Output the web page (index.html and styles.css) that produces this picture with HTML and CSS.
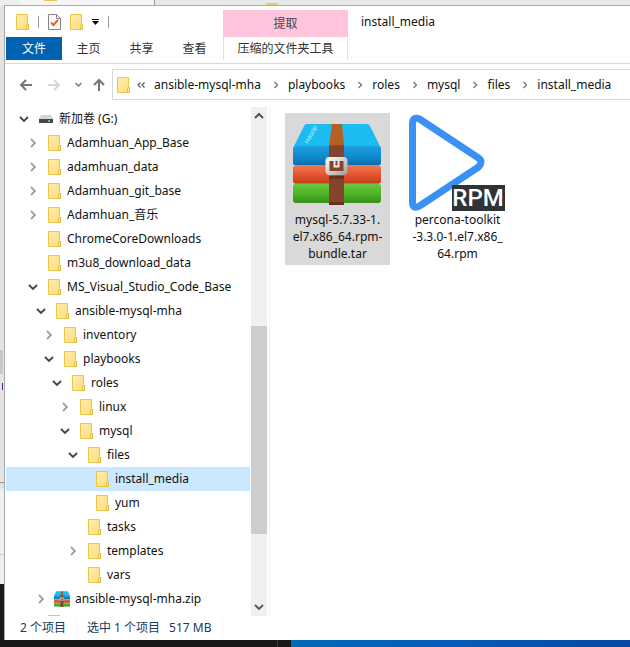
FILE: index.html
```html
<!DOCTYPE html>
<html lang="zh-CN">
<head>
<meta charset="utf-8">
<meta name="viewport" content="width=device-width, initial-scale=1">
<title>install_media</title>
<link rel="stylesheet" href="styles.css">
</head>
<body>
<svg class="defs" width="0" height="0" aria-hidden="true">
  <defs>
    <linearGradient id="fold" x1="0" y1="0" x2="1" y2="1"><stop offset="0" stop-color="#ffeeb0"/><stop offset="1" stop-color="#ffdc74"/></linearGradient>
    <linearGradient id="blue" x1="0" y1="0" x2="0" y2="1"><stop offset="0" stop-color="#1f9ade"/><stop offset=".5" stop-color="#108ed0"/><stop offset="1" stop-color="#0b6cae"/></linearGradient>
    <linearGradient id="red" x1="0" y1="0" x2="0" y2="1"><stop offset="0" stop-color="#f07850"/><stop offset=".5" stop-color="#e4552f"/><stop offset="1" stop-color="#c23c1c"/></linearGradient>
    <linearGradient id="green" x1="0" y1="0" x2="0" y2="1"><stop offset="0" stop-color="#6cc840"/><stop offset=".5" stop-color="#4fb428"/><stop offset="1" stop-color="#359017"/></linearGradient>
    <linearGradient id="metal" x1="0" y1="0" x2="1" y2="1"><stop offset="0" stop-color="#fafafa"/><stop offset="1" stop-color="#aaa6a2"/></linearGradient>
    <symbol id="folder" viewBox="0 0 13 16"><path d="M.5.5h11v10h1v5H.5z" fill="url(#fold)" stroke="#ecc64c"/><path d="M10.5 15.5v-4l1-1h1v5z" fill="#ffe89a" stroke="#e5bd42"/></symbol>
    <symbol id="right" viewBox="0 0 8 10"><path d="M2 1l4 4-4 4" fill="none" stroke="currentColor" stroke-width="1.8"/></symbol>
    <symbol id="down" viewBox="0 0 10 8"><path d="M1 2l4 4 4-4" fill="none" stroke="currentColor" stroke-width="1.8"/></symbol>
    <symbol id="archive" viewBox="0 0 88 82" preserveAspectRatio="none">
      <path d="M14 1h60q2 0 3 2l11 22H0L11 3q1-2 3-2z" fill="#1bbcf2"/>
      <rect y="23" width="88" height="19" rx="3" fill="url(#blue)"/>
      <rect y="42" width="88" height="18" rx="3" fill="url(#red)"/>
      <rect y="60" width="88" height="19" rx="3" fill="url(#green)"/>
      <path d="M39 1h10l2 22H36z" fill="#b46022"/>
      <path d="M36 22h15v59H36z" fill="#86432c"/>
      <path d="M36 52h15v3H36zM36 78h15v3H36z" fill="#683020"/>
      <rect x="34.500" y="35.500" width="18" height="14" rx="2" fill="#86432c" stroke="url(#metal)" stroke-width="4"/>
      <path d="M41.500 37v6h4v-6" fill="none" stroke="#eee" stroke-width="2"/>
    </symbol>
  </defs>
</svg>
<div class="desktop">
  <div class="behind-top" aria-hidden="true"></div>
  <div class="behind-left" aria-hidden="true"></div>
  <main class="window">
    <header class="head">
      <div class="quick">
        <svg class="folder"><use href="#folder"/></svg>
        <span class="bar"></span>
        <button class="plain" aria-label="属性"><svg class="check" viewBox="0 0 13 16"><path d="M.5.5h8l4 4v11H.5z" fill="#fafafa" stroke="#858585"/><path d="M8.500.5v4h4" fill="none" stroke="#858585"/><path d="M3 8.500L5.500 11l4.500-5" fill="none" stroke="#e8602c" stroke-width="2"/></svg></button>
        <button class="plain" aria-label="新建文件夹"><svg class="folder"><use href="#folder"/></svg></button>
        <button class="plain" aria-label="自定义"><svg class="more" viewBox="0 0 7 6"><path d="M0 0h7v1H0zM0 2h7L3.500 6z"/></svg></button>
        <span class="bar"></span>
      </div>
      <nav class="tabs">
        <button class="tab file">文件</button>
        <button class="tab">主页</button>
        <button class="tab">共享</button>
        <button class="tab">查看</button>
      </nav>
      <div class="context">
        <div class="extract">提取</div>
        <button class="tools">压缩的文件夹工具</button>
      </div>
      <h1 class="title">install_media</h1>
    </header>
    <div class="address">
      <div class="moves">
        <button class="plain" aria-label="后退"><svg class="arrow" viewBox="0 0 14 14"><path d="M13 7H2M7 2L2 7l5 5" fill="none" stroke="#757575" stroke-width="2"/></svg></button>
        <button class="plain" aria-label="前进"><svg class="arrow" viewBox="0 0 14 14"><path d="M1 7h11M7 2l5 5-5 5" fill="none" stroke="#d8d8d8" stroke-width="2"/></svg></button>
        <button class="plain" aria-label="最近"><svg class="tiny" viewBox="0 0 7 5"><path d="M.5 1l3 3 3-3" fill="none" stroke="#777" stroke-width="1.500"/></svg></button>
        <button class="plain" aria-label="向上"><svg class="arrow" viewBox="0 0 14 14"><path d="M7 13V2M2 7l5-5 5 5" fill="none" stroke="#757575" stroke-width="2"/></svg></button>
      </div>
      <nav class="crumbs" aria-label="地址">
        <svg class="folder"><use href="#folder"/></svg>
        <svg class="double" viewBox="0 0 8 6"><path d="M3.500.5L1 3l2.500 2.500M7.500.5L5 3l2.500 2.500" fill="none" stroke="#555" stroke-width="1.200"/></svg>
        <a href="#">ansible-mysql-mha</a><svg class="sep"><use href="#right"/></svg>
        <a href="#">playbooks</a><svg class="sep"><use href="#right"/></svg>
        <a href="#">roles</a><svg class="sep"><use href="#right"/></svg>
        <a href="#">mysql</a><svg class="sep"><use href="#right"/></svg>
        <a href="#">files</a><svg class="sep"><use href="#right"/></svg>
        <a href="#">install_media</a>
      </nav>
    </div>
    <div class="content">
      <div class="side">
        <ul class="tree">
          <li class="d0"><svg class="open"><use href="#down"/></svg><svg class="drive" viewBox="0 0 14 8"><path d="M2 0h10l2 4H0z" fill="#d3d6d9"/><path d="M0 4h14v4H0z" fill="#43474b"/><path d="M9 5h2v2H9z" fill="#35e04c"/></svg><span>新加卷 (G:)</span></li>
          <li class="d1"><svg class="shut"><use href="#right"/></svg><svg class="folder"><use href="#folder"/></svg><span>Adamhuan_App_Base</span></li>
          <li class="d1"><svg class="shut"><use href="#right"/></svg><svg class="folder"><use href="#folder"/></svg><span>adamhuan_data</span></li>
          <li class="d1"><svg class="shut"><use href="#right"/></svg><svg class="folder"><use href="#folder"/></svg><span>Adamhuan_git_base</span></li>
          <li class="d1"><svg class="shut"><use href="#right"/></svg><svg class="folder"><use href="#folder"/></svg><span>Adamhuan_音乐</span></li>
          <li class="d1"><i class="none"></i><svg class="folder"><use href="#folder"/></svg><span>ChromeCoreDownloads</span></li>
          <li class="d1"><i class="none"></i><svg class="folder"><use href="#folder"/></svg><span>m3u8_download_data</span></li>
          <li class="d1"><svg class="open"><use href="#down"/></svg><svg class="folder"><use href="#folder"/></svg><span>MS_Visual_Studio_Code_Base</span></li>
          <li class="d2"><svg class="open"><use href="#down"/></svg><svg class="folder"><use href="#folder"/></svg><span>ansible-mysql-mha</span></li>
          <li class="d3"><svg class="shut"><use href="#right"/></svg><svg class="folder"><use href="#folder"/></svg><span>inventory</span></li>
          <li class="d3"><svg class="open"><use href="#down"/></svg><svg class="folder"><use href="#folder"/></svg><span>playbooks</span></li>
          <li class="d4"><svg class="open"><use href="#down"/></svg><svg class="folder"><use href="#folder"/></svg><span>roles</span></li>
          <li class="d5"><svg class="shut"><use href="#right"/></svg><svg class="folder"><use href="#folder"/></svg><span>linux</span></li>
          <li class="d5"><svg class="open"><use href="#down"/></svg><svg class="folder"><use href="#folder"/></svg><span>mysql</span></li>
          <li class="d6"><svg class="open"><use href="#down"/></svg><svg class="folder"><use href="#folder"/></svg><span>files</span></li>
          <li class="d7 current"><i class="none"></i><svg class="folder"><use href="#folder"/></svg><span>install_media</span></li>
          <li class="d7"><i class="none"></i><svg class="folder"><use href="#folder"/></svg><span>yum</span></li>
          <li class="d6"><i class="none"></i><svg class="folder"><use href="#folder"/></svg><span>tasks</span></li>
          <li class="d6"><svg class="shut"><use href="#right"/></svg><svg class="folder"><use href="#folder"/></svg><span>templates</span></li>
          <li class="d6"><i class="none"></i><svg class="folder"><use href="#folder"/></svg><span>vars</span></li>
          <li class="d2"><svg class="shut"><use href="#right"/></svg><svg class="zip"><use href="#archive"/></svg><span>ansible-mysql-mha.zip</span></li>
          <li class="next" aria-hidden="true"></li>
        </ul>
        <div class="scroll" aria-hidden="true">
          <svg class="scroll-arrow" viewBox="0 0 10 8"><path d="M1 6l4-4 4 4" fill="none" stroke="currentColor" stroke-width="2"/></svg>
          <div class="track"><div class="thumb"></div></div>
          <svg class="scroll-arrow"><use href="#down"/></svg>
        </div>
      </div>
      <section class="files" aria-label="文件">
        <figure class="item selected">
          <svg class="big" viewBox="0 0 92 96"><use href="#archive" x="1" y="8" width="88" height="83"/><text class="brand" transform="translate(16 29) rotate(-62)">Haozip</text></svg>
          <figcaption>mysql-5.7.33-1.<br>el7.x86_64.rpm-<br>bundle.tar</figcaption>
        </figure>
        <figure class="item">
          <svg class="big" viewBox="0 0 92 96"><path d="M.5 9v78q0 8 7 4l59-39q5-5 0-9L7.500 4q-7-3-7 5z" fill="none" stroke="#3991f5" stroke-width="7" stroke-linejoin="round"/><path d="M40 70h53v26H40z" fill="#2e3439"/><text class="rpm" x="66" y="91" text-anchor="middle">RPM</text></svg>
          <figcaption>percona-toolkit<br>-3.3.0-1.el7.x86_<br>64.rpm</figcaption>
        </figure>
      </section>
    </div>
    <footer class="status"><span>2 个项目</span><span class="chosen">选中 1 个项目<b>517 MB</b></span></footer>
  </main>
  <div class="behind-bottom" aria-hidden="true"></div>
</div>
</body>
</html>
```

FILE: styles.css
```css
* { box-sizing: border-box; }
body {
  margin: 0;
  background: #eee;
  color: #111;
  font: 12px/16px "Noto Sans", "Noto Sans CJK SC", sans-serif;
}
.defs { position: absolute; }
svg { display: block; flex: none; }
button { font: inherit; color: inherit; border: 0; background: none; padding: 0; }
a { color: inherit; text-decoration: none; }
ul, figure, h1 { margin: 0; padding: 0; list-style: none; }

.desktop {
  display: grid;
  grid-template: 6px 1fr 7px / 5px 1fr;
  min-height: 100vh;
  overflow: hidden;
}
.behind-top {
  grid-column: 1 / 3;
  background:
    linear-gradient(#ecc64c, #ecc64c) 44px 0 / 13px 1px no-repeat,
    linear-gradient(#e0c050, #ffe38a) 266px 3px / 12px 3px no-repeat,
    linear-gradient(90deg, #eee 0 20px, #f5f5f5 20px 154px, #999 154px 155px, #e8e8e8 155px);
}
.behind-left {
  background:
    linear-gradient(#c8c8c8, #c8c8c8) 0 344px / 3px 24px no-repeat,
    linear-gradient(#5a2080, #5a2080) 2px 377px / 1px 7px no-repeat,
    linear-gradient(#e4e4e4 0 476px, #999 476px 477px, #d8d8d8 477px, #f0f0f0 485px 548px, #ccc 548px 549px, #eee 549px 578px, #191919 578px);
}
.behind-bottom {
  grid-column: 1 / 3;
  background: linear-gradient(90deg, #191919 0 277px, #383838 277px 278px, #191919 278px 291px, #0069b9 291px, #055cb8 450px, #0549a4);
}
.window {
  display: flex;
  flex-direction: column;
  min-width: 0;
  background: #fff;
  box-shadow: 0 0 0 1px #aaa;
  clip-path: inset(-1px -1px 0 -1px);
}
.folder { width: 13px; height: 16px; }

.head {
  display: grid;
  grid-template: 31px 23px / 218px 125px 1fr;
  padding-bottom: 3px;
  border-bottom: 1px solid #d9d9d9;
}
.quick { display: flex; align-items: center; gap: 9px; padding-left: 11px; }
.bar { width: 1px; height: 12px; background: #999; }
.check { width: 13px; height: 16px; }
.plain { display: grid; place-items: center; }
.more { width: 7px; height: 6px; }
.tabs { grid-row: 2; grid-column: 1; display: flex; padding-left: 1px; }
.tab { width: 53px; color: #333; }
.file { width: 56px; background: #0063b1; color: #fff; }
.context { grid-row: 1 / 3; grid-column: 2; display: grid; grid-template-rows: 27px 1fr; padding-top: 4px; }
.extract { display: grid; place-items: center; background: #ffc5dc; color: #444; }
.tools { border: solid #e2e2e2; border-width: 0 1px; color: #333; }
.title { padding: 8px 13px; font-size: 12px; font-weight: 400; }

.address { display: flex; gap: 6px; padding: 5px 0 7px 14px; }
.moves { display: grid; grid-template-columns: 28px 28px 17px 14px; align-items: center; justify-items: start; }
.arrow { width: 14px; height: 14px; }
.tiny { width: 7px; height: 5px; }
.crumbs {
  flex: 1;
  display: flex;
  align-items: center;
  height: 31px;
  padding-left: 4px;
  border: 1px solid #d9d9d9;
  border-right: 0;
  white-space: nowrap;
}
.double { width: 8px; height: 6px; margin: 0 9px 0 7px; }
.sep { width: 6px; height: 8px; margin: 0 9px 0 12px; color: #777; }

.content { flex: 1; display: flex; }
.side { display: flex; width: 265px; border-right: 1px solid #f4f4f4; }
.tree { flex: 1; padding-left: 1px; }
.tree li { display: flex; align-items: center; height: 24px; white-space: nowrap; }
.tree span { margin-left: 6px; }
.open, .none { width: 10px; height: 8px; margin-right: 10px; color: #444; }
.shut { width: 8px; height: 10px; margin: 0 11px 0 1px; color: #a0a0a0; }
.drive { width: 14px; height: 8px; }
.zip { width: 16px; height: 16px; margin: 0 -1px 0 -2px; }
.d0 { padding-left: 13px; }
.d1 { padding-left: 22px; }
.d2 { padding-left: 30px; }
.d3 { padding-left: 38px; }
.d4 { padding-left: 46px; }
.d5 { padding-left: 54px; }
.d6 { padding-left: 62px; }
.d7 { padding-left: 70px; }
.tree .current { background: #cce8ff; }
.tree .next { width: 12px; height: 1px; margin: 4px 0 0 42px; background: #ecc64c; }
.scroll { display: flex; flex-direction: column; align-items: center; width: 16px; margin-left: 1px; margin-right: 2px; padding: 5px 0; background: #f0f0f0; }
.scroll-arrow { width: 10px; height: 8px; color: #555; }
.track { flex: 1; display: flex; flex-direction: column; width: 100%; }
.track::before { content: ""; flex: 3; }
.track::after { content: ""; flex: 1; }
.thumb { flex: none; height: 43%; background: #cdcdcd; }
.files { display: flex; align-items: flex-start; gap: 15px; padding: 6px 15px; }
.item { width: 105px; padding-bottom: 3px; text-align: center; }
.selected { background: #d9d9d9; }
.big { width: 92px; height: 96px; margin: 2px auto 0; overflow: visible; }
.item figcaption { line-height: 17px; }
.brand { font: 6px "Open Sans", sans-serif; fill: #d8f4ff; }
.rpm { font: 500 24px Roboto, sans-serif; fill: #fff; }
.status { display: flex; height: 24px; padding: 4px 15px 3px; color: #1e395b; }
.status span { padding-right: 10px; border-right: 1px solid #f4f4f4; }
.status .chosen { padding-left: 10px; }
.status b { margin-left: 9px; font-weight: 400; }
```
